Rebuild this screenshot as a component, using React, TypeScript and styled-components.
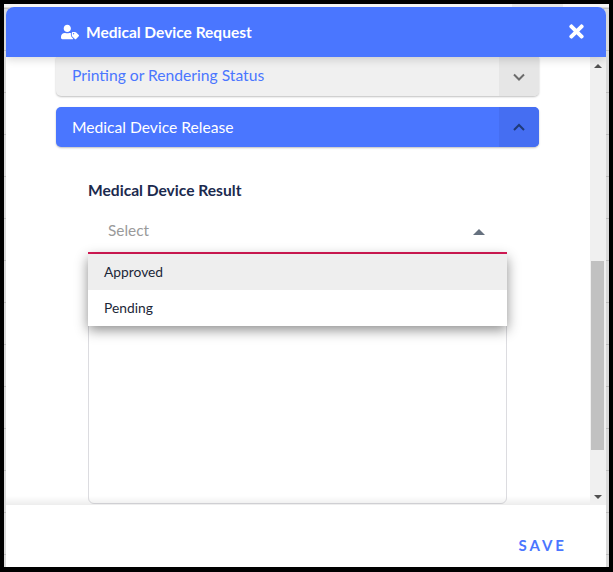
import React from 'react';
import styled, { createGlobalStyle } from 'styled-components';
import { FaTimes, FaUserTag } from 'react-icons/fa';

const GlobalStyle = createGlobalStyle`
  html, body {
    margin: 0;
    padding: 0;
    background: #000;
  }

  * {
    box-sizing: border-box;
  }
`;

const Frame = styled.div`
  position: relative;
  width: 613px;
  height: 572px;
  overflow: hidden;
  padding: 4px 4px 5px 4px;
  background: #000;
  font-family: Lato, 'Open Sans', sans-serif;
`;

const Backdrop = styled.div`
  height: 100%;
  padding: 0 3px 0 2px;
  border-top: 3px solid #f6f6f6;
  background: repeating-linear-gradient(#dadada 0 1px, #bdbdbd 1px 2px, #dadada 2px 42px);
`;

const AdminTag = styled.span`
  position: absolute;
  top: 4px;
  left: 512px;
  width: 51px;
  height: 3px;
  padding-left: 10px;
  overflow: hidden;
  background: #e8e8e8;
  font-size: 10px;
  font-weight: 700;
  line-height: 12px;
  color: #666;
`;

const Dialog = styled.div`
  position: relative;
  display: flex;
  flex-direction: column;
  height: 100%;
  border-radius: 8px 8px 0 0;
  background: #fff;
  overflow: hidden;
`;

const Header = styled.header`
  position: relative;
  z-index: 3;
  flex: none;
  display: flex;
  align-items: center;
  justify-content: space-between;
  height: 50px;
  padding: 0 19px 0 55px;
  background: #4a76ff;
  color: #fff;
  box-shadow: 0 3px 8px rgba(0, 0, 0, 0.14);
`;

const HeaderTitle = styled.div`
  display: flex;
  align-items: center;
  gap: 7px;
  font-size: 15.5px;
  font-weight: 700;
`;

const CloseButton = styled.button`
  display: flex;
  margin-bottom: 2px;
  padding: 0;
  border: none;
  background: none;
  color: #fff;
  font-size: 21px;
`;

const Body = styled.div`
  position: relative;
  flex: none;
  display: flex;
  height: 448px;
  overflow: hidden;
`;

const Content = styled.div`
  width: 584px;
  padding-left: 50px;
`;

const PanelHeader = styled.div<{ $active?: boolean; $clipped?: boolean }>`
  display: flex;
  justify-content: space-between;
  width: 483px;
  height: ${p => (p.$clipped ? '39px' : '40px')};
  margin-bottom: ${p => (p.$clipped ? '11px' : '0')};
  border-radius: ${p => (p.$clipped ? '0 0 5px 5px' : '5px')};
  overflow: hidden;
  background: ${p => (p.$active ? '#4a76ff' : '#f0f0f0')};
  color: ${p => (p.$active ? '#fff' : '#4a76ff')};
  box-shadow: 0 1px 2px rgba(0, 0, 0, 0.25);
  font-size: 15.65px;
`;

const PanelLabel = styled.span<{ $raised?: boolean }>`
  align-self: center;
  padding: ${p => (p.$raised ? '0 0 4px 16px' : '0 0 0 16px')};
`;

const ChevronBox = styled.div<{ $active?: boolean }>`
  display: flex;
  align-items: center;
  justify-content: center;
  width: 40px;
  background: ${p => (p.$active ? '#456ef2' : '#e6e6e6')};
  color: ${p => (p.$active ? '#1f3a78' : '#6b6b6b')};
`;

const ReleaseForm = styled.div`
  display: flex;
  flex-direction: column;
  width: 419px;
  margin: 33px 0 0 32px;
`;

const FieldLabel = styled.label`
  font-size: 15.6px;
  font-weight: 700;
  line-height: 20px;
  color: #1b2a4e;
`;

const SelectWrap = styled.div`
  position: relative;
`;

const SelectControl = styled.div`
  display: flex;
  align-items: center;
  justify-content: space-between;
  height: 44px;
  margin-top: 10px;
  padding: 0 22px 2px 20px;
  border-bottom: 2px solid #dc1a57;
  font-size: 15.4px;
  color: #9a9a9a;
`;

const Caret = styled.span`
  width: 0;
  height: 0;
  margin-top: 3px;
  border-left: 6px solid transparent;
  border-right: 6px solid transparent;
  border-bottom: 6px solid #66717f;
`;

const Menu = styled.ul`
  position: absolute;
  z-index: 2;
  top: 100%;
  left: 0;
  right: 0;
  margin: 0;
  padding: 0;
  list-style: none;
  background: #fff;
  box-shadow: 0 4px 12px rgba(0, 0, 0, 0.45);
`;

const MenuItem = styled.li<{ $highlighted?: boolean }>`
  height: 36px;
  padding-left: 16px;
  font-size: 13.8px;
  line-height: 36px;
  color: #1c2738;
  background: ${p => (p.$highlighted ? '#eeeeee' : '#fff')};
`;

const NotesBox = styled.div`
  height: 240px;
  margin-top: 10px;
  border: 1px solid #dcdce0;
  border-radius: 6px;
`;

const FooterShade = styled.div`
  position: absolute;
  left: 0;
  right: 0;
  bottom: 0;
  height: 9px;
  background: linear-gradient(rgba(0, 0, 0, 0), rgba(0, 0, 0, 0.07));
`;

const Scrollbar = styled.div`
  position: relative;
  z-index: 1;
  display: flex;
  flex-direction: column;
  align-items: center;
  width: 16px;
  margin-left: auto;
  background: #f0f0f0;
`;

const ScrollArrow = styled.span<{ $down?: boolean }>`
  flex: none;
  width: 0;
  height: 0;
  margin: ${p => (p.$down ? '0 0 6px' : '7px 0 0')};
  border-left: 4px solid transparent;
  border-right: 4px solid transparent;
  border-bottom: ${p => (p.$down ? 'none' : '4px solid #505050')};
  border-top: ${p => (p.$down ? '4px solid #505050' : 'none')};
`;

const ScrollTrack = styled.div`
  flex: 1;
  align-self: stretch;
  display: flex;
  flex-direction: column;
  justify-content: flex-end;
  padding: 0 2px 0 1px;
`;

const ScrollThumb = styled.div`
  height: 189px;
  margin-bottom: 45px;
  background: #c1c1c1;
`;

const Footer = styled.footer`
  flex: 1;
  display: flex;
  align-items: center;
  justify-content: flex-end;
  padding: 18px 39px 0 0;
  background: #fff;
`;

const SaveButton = styled.button`
  padding: 0;
  border: none;
  background: none;
  font-family: inherit;
  font-size: 15px;
  font-weight: 700;
  letter-spacing: 3px;
  color: #4a76ff;
`;

const Chevron = ({ up }: { up?: boolean }) => (
  <svg width="14" height="14" viewBox="0 0 14 14" fill="none" stroke="currentColor" strokeWidth="2">
    <polyline points={up ? '2,10 7,5 12,10' : '2,4.5 7,9.5 12,4.5'} />
  </svg>
);

export default function App() {
  return (
    <>
      <GlobalStyle />
      <Frame>
        <AdminTag>ADMIN</AdminTag>
        <Backdrop>
          <Dialog>
            <Header>
              <HeaderTitle>
                <FaUserTag size={18} />
                Medical Device Request
              </HeaderTitle>
              <CloseButton>
                <FaTimes />
              </CloseButton>
            </Header>
            <Body>
              <Content>
                <PanelHeader $clipped>
                  <PanelLabel $raised>Printing or Rendering Status</PanelLabel>
                  <ChevronBox>
                    <Chevron />
                  </ChevronBox>
                </PanelHeader>
                <PanelHeader $active>
                  <PanelLabel>Medical Device Release</PanelLabel>
                  <ChevronBox $active>
                    <Chevron up />
                  </ChevronBox>
                </PanelHeader>
                <ReleaseForm>
                  <FieldLabel>Medical Device Result</FieldLabel>
                  <SelectWrap>
                    <SelectControl>
                      Select
                      <Caret />
                    </SelectControl>
                    <Menu>
                      <MenuItem $highlighted>Approved</MenuItem>
                      <MenuItem>Pending</MenuItem>
                    </Menu>
                  </SelectWrap>
                  <NotesBox />
                </ReleaseForm>
              </Content>
              <FooterShade />
              <Scrollbar>
                <ScrollArrow />
                <ScrollTrack>
                  <ScrollThumb />
                </ScrollTrack>
                <ScrollArrow $down />
              </Scrollbar>
            </Body>
            <Footer>
              <SaveButton>SAVE</SaveButton>
            </Footer>
          </Dialog>
        </Backdrop>
      </Frame>
    </>
  );
}
